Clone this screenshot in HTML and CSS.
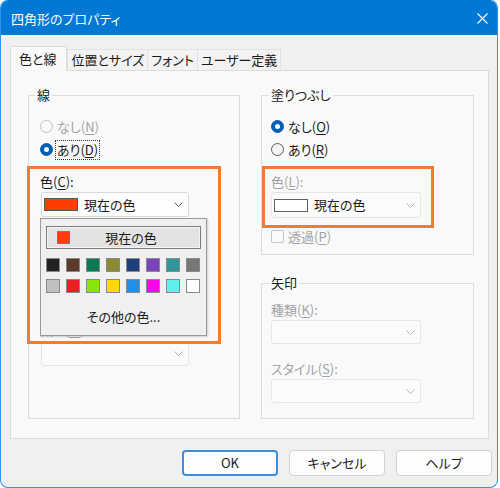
FILE: index.html
```html
<!DOCTYPE html>
<html lang="ja">
<head>
<meta charset="utf-8">
<title>四角形のプロパティ</title>
<link rel="stylesheet" href="styles.css">
</head>
<body>
<div class="window">
  <div class="titlebar">
    <span class="title">四角形のプロパティ</span>
    <svg class="close" width="11" height="11" viewBox="0 0 11 11"><path d="M0.5 0.5 L10.5 10.5 M10.5 0.5 L0.5 10.5" stroke="#ffffff" stroke-width="1.1" fill="none"/></svg>
  </div>
  <div class="tabs">
    <div class="tab active">色と線</div>
    <div class="tab">位置とサイズ</div>
    <div class="tab">フォント</div>
    <div class="tab">ユーザー定義</div>
  </div>
  <div class="panel">
    <div class="columns">
      <fieldset class="group group-line">
        <legend>線</legend>
        <div class="row disabled"><span class="radio"></span><span class="rtext">なし(<u>N</u>)</span></div>
        <div class="row"><span class="radio checked"></span><span class="rtext focus">あり(<u>D</u>)</span></div>
        <div class="label first">色(<u>C</u>):</div>
        <div class="combo">
          <span class="swatch red"></span><span class="ctext">現在の色</span>
          <svg class="chev" width="9" height="5" viewBox="0 0 9 5"><path d="M0.5 0.5 L4.5 4.5 L8.5 0.5" stroke="#5f5f5f" fill="none"/></svg>
        </div>
        <div class="label">線種(<u>S</u>):</div>
        <div class="combo"></div>
        <div class="label">点線(<u>A</u>):</div>
        <div class="combo"></div>
        <div class="label last disabled">太さ(<u>W</u>):</div>
        <div class="combo disabled lastcombo">
          <svg class="chev" width="9" height="5" viewBox="0 0 9 5"><path d="M0.5 0.5 L4.5 4.5 L8.5 0.5" stroke="#b4b4b4" fill="none"/></svg>
        </div>
      </fieldset>
      <div class="rightcol">
        <fieldset class="group group-fill">
          <legend>塗りつぶし</legend>
          <div class="row"><span class="radio checked"></span><span class="rtext">なし(<u>O</u>)</span></div>
          <div class="row"><span class="radio"></span><span class="rtext">あり(<u>R</u>)</span></div>
          <div class="label first disabled">色(<u>L</u>):</div>
          <div class="combo wide disabled">
            <span class="swatch white"></span><span class="ctext">現在の色</span>
            <svg class="chev" width="9" height="5" viewBox="0 0 9 5"><path d="M0.5 0.5 L4.5 4.5 L8.5 0.5" stroke="#b4b4b4" fill="none"/></svg>
          </div>
          <div class="row check-row disabled"><span class="checkbox"></span><span class="rtext">透過(<u>P</u>)</span></div>
        </fieldset>
        <fieldset class="group group-arrow">
          <legend>矢印</legend>
          <div class="label disabled">種類(<u>K</u>):</div>
          <div class="combo wide disabled">
            <svg class="chev" width="9" height="5" viewBox="0 0 9 5"><path d="M0.5 0.5 L4.5 4.5 L8.5 0.5" stroke="#b4b4b4" fill="none"/></svg>
          </div>
          <div class="label disabled second">スタイル(<u>S</u>):</div>
          <div class="combo wide disabled">
            <svg class="chev" width="9" height="5" viewBox="0 0 9 5"><path d="M0.5 0.5 L4.5 4.5 L8.5 0.5" stroke="#b4b4b4" fill="none"/></svg>
          </div>
        </fieldset>
      </div>
    </div>

    <div class="popup">
      <div class="current"><span class="mini red"></span><span class="curtext">現在の色</span></div>
      <div class="palette">
        <span class="cell" style="background:#222222"></span>
        <span class="cell" style="background:#5e3a2c"></span>
        <span class="cell" style="background:#087a52"></span>
        <span class="cell" style="background:#8c8a30"></span>
        <span class="cell" style="background:#1f3f78"></span>
        <span class="cell" style="background:#7c44ba"></span>
        <span class="cell" style="background:#2e9898"></span>
        <span class="cell" style="background:#777777"></span>
        <span class="cell" style="background:#c0c0c0"></span>
        <span class="cell" style="background:#ee1c24"></span>
        <span class="cell" style="background:#8ae40c"></span>
        <span class="cell" style="background:#ffd800"></span>
        <span class="cell" style="background:#2390e6"></span>
        <span class="cell" style="background:#ff00f2"></span>
        <span class="cell" style="background:#5ff0ee"></span>
        <span class="cell" style="background:#ffffff"></span>
      </div>
      <div class="more">その他の色...</div>
    </div>

    <div class="mark mark-left"></div>
    <div class="mark mark-right"></div>
  </div>
  <div class="buttons">
    <div class="btn default">OK</div>
    <div class="btn">キャンセル</div>
    <div class="btn">ヘルプ</div>
  </div>
</div>
</body>
</html>
```
FILE: styles.css
```css
* { box-sizing: border-box; }
html, body { margin: 0; padding: 0; background: #ffffff; }
body {
  font-family: "Noto Sans CJK JP", "Noto Sans", sans-serif;
  font-feature-settings: "palt";
  font-size: 13px;
  color: #1b1b1b;
}
u { text-underline-offset: 2px; }

.window {
  width: 498px;
  height: 488px;
  border: 1px solid #2a95ea;
  border-top-color: #0078d4;
  border-radius: 8px;
  background: #f0f0f0;
  overflow: hidden;
  display: flex;
  flex-direction: column;
}

.titlebar {
  height: 34px;
  background: #0078d4;
  color: #ffffff;
  display: flex;
  align-items: center;
  justify-content: space-between;
  padding: 0 9px 0 10px;
  flex-shrink: 0;
}
.title { line-height: 16px; margin-top: 1px; }
.close { display: block; }

.tabs {
  margin-top: 11px;
  height: 24px;
  padding-left: 9px;
  display: flex;
  align-items: flex-end;
  flex-shrink: 0;
}
.tab {
  height: 21px;
  padding: 0 3px;
  display: flex;
  align-items: center;
  background: #f2f2f2;
  border: 1px solid #e2e2e2;
  border-bottom: none;
  margin-left: -1px;
  line-height: 16px;
}
.tab.active {
  height: 25px;
  margin-left: 0;
  margin-bottom: -1px;
  padding: 0 10px 0 8px;
  background: #f9f9f9;
  border-color: #dcdcdc;
  position: relative;
  z-index: 2;
}
.tab.active + .tab { margin-left: 0; }

.panel {
  position: relative;
  margin-left: 9px;
  width: 479px;
  height: 369px;
  background: #f9f9f9;
  border: 1px solid #dcdcdc;
  padding: 16px 14px 0 17px;
  flex-shrink: 0;
}
.columns {
  display: grid;
  grid-template-columns: 212px 213px;
  column-gap: 21px;
}
.rightcol { display: flex; flex-direction: column; }

.group {
  margin: 0;
  min-width: 0;
  border: 1px solid #dcdcdc;
  display: flex;
  flex-direction: column;
  align-items: flex-start;
}
.group legend {
  padding: 0 2px;
  margin-left: -2px;
  line-height: 16px;
}
.group-line legend { margin-left: -5px; }
.group-line { height: 332px; padding: 12px 10px 0 11px; }
.group-fill { height: 168px; padding: 12px 10px 0 9px; }
.group-arrow { height: 144px; margin-top: 20px; padding: 11px 10px 0 9px; }

.row {
  height: 23px;
  display: flex;
  align-items: center;
}
.radio {
  width: 13px;
  height: 13px;
  border-radius: 50%;
  border: 1px solid #5c5c5c;
  background: #f4f4f4;
  position: relative;
  flex-shrink: 0;
}
.radio.checked { background: #005fb8; border-color: #005fb8; }
.radio.checked::after {
  content: "";
  position: absolute;
  left: 3px; top: 3px;
  width: 5px; height: 5px;
  border-radius: 50%;
  background: #ffffff;
}
.disabled .radio { border-color: #c4c4c4; background: #f9f9f9; }
.rtext { margin-left: 4px; line-height: 16px; }
.rtext.focus { outline: 1px dotted #3a3a3a; outline-offset: 1px; }
.disabled, .disabled .rtext { color: #a3a3a3; }

.checkbox {
  width: 13px;
  height: 13px;
  border: 1px solid #c6c6c6;
  border-radius: 2px;
  background: #fafafa;
}
.check-row { margin-top: 7px; }

.label { line-height: 16px; margin-top: 6px; }
.label.first { margin-top: 13px; }
.label.second { margin-top: 17px; }
.label.last { margin-top: 7px; }
.group-arrow .label:first-of-type { margin-top: 0; }

.combo {
  margin-top: 2px;
  margin-left: 1px;
  width: 148px;
  height: 25px;
  background: #fdfdfd;
  border: 1px solid #dadada;
  border-radius: 3px;
  display: flex;
  align-items: center;
  padding: 0 5px 0 2px;
  position: relative;
}
.combo.lastcombo { margin-top: 3px; }
.combo.wide { width: 150px; margin-left: 0; height: 26px; }
.group-arrow .combo.wide { height: 24px; }
.combo.disabled { background: #fbfbfb; border-color: #e6e6e6; }
.combo .chev { margin-left: auto; display: block; }
.ctext { margin-left: 6px; line-height: 16px; color: #1b1b1b; }
.swatch {
  width: 34px;
  height: 13px;
  border: 1px solid #5a5a5a;
  flex-shrink: 0;
}
.swatch.red { background: #ff3d00; }
.swatch.white { background: #ffffff; border-color: #606060; }

.popup {
  position: absolute;
  left: 29px;
  top: 147px;
  width: 167px;
  height: 118px;
  background: #f0f0f0;
  border: 1px solid #9a9a9a;
  box-shadow: 1px 1px 2px rgba(0,0,0,0.18);
  padding: 7px 5px 0 5px;
  z-index: 3;
}
.current {
  width: 155px;
  height: 23px;
  border: 1px solid #7c7c7c;
  box-shadow: inset 0 0 0 1px #f4f4f4;
  background: #e3e3e3;
  display: flex;
  align-items: center;
}
.mini {
  width: 13px;
  height: 13px;
  margin-left: 10px;
  border: 1px solid #7a7a7a;
  flex-shrink: 0;
}
.mini.red { background: #ff3d00; }
.curtext { flex: 1; text-align: center; padding-right: 8px; line-height: 16px; }
.palette {
  margin-top: 9px;
  display: grid;
  grid-template-columns: repeat(8, 14px);
  column-gap: 6px;
  row-gap: 7px;
}
.cell {
  width: 14px;
  height: 14px;
  border: 1px solid #8a8a8a;
}
.more {
  margin-top: 16px;
  text-align: center;
  line-height: 16px;
}

.mark {
  position: absolute;
  border: 3px solid #ee7d31;
  z-index: 4;
}
.mark-left { left: 16px; top: 95px; width: 194px; height: 178px; }
.mark-right { left: 251px; top: 95px; width: 172px; height: 62px; }

.buttons {
  margin-top: 11px;
  display: flex;
  justify-content: flex-end;
  gap: 11px;
  padding-right: 5px;
}
.btn {
  width: 96px;
  height: 26px;
  background: #fdfdfd;
  border: 1px solid #d2d2d2;
  border-radius: 4px;
  display: flex;
  align-items: center;
  justify-content: center;
  line-height: 16px;
}
.btn.default { border: 2px solid #3d8fdb; }
```
